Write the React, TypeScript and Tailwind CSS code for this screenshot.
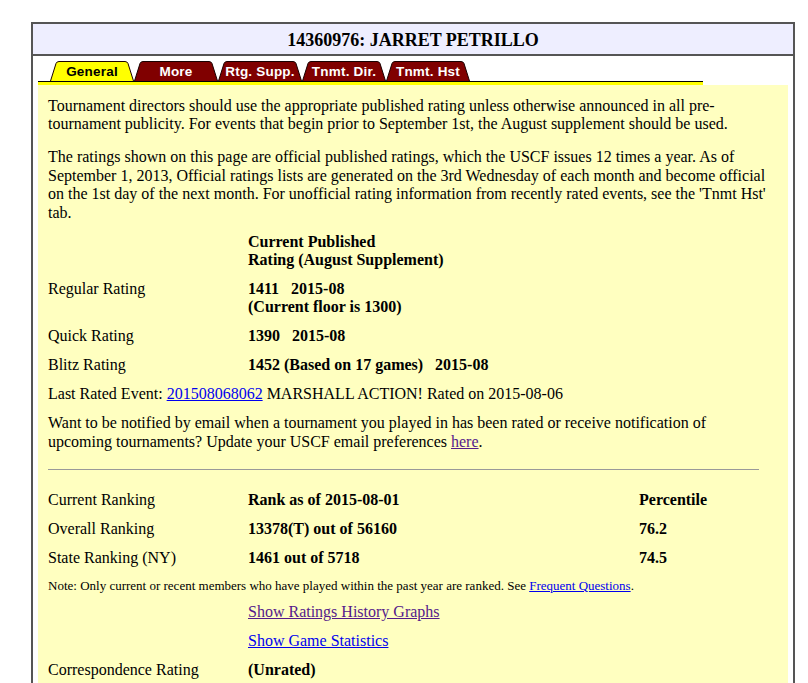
const serif = { fontFamily: '"Liberation Serif", "Times New Roman", serif' };

const tabs = [
  { label: "General", active: true },
  { label: "More" },
  { label: "Rtg. Supp." },
  { label: "Tnmt. Dir." },
  { label: "Tnmt. Hst" },
];

function Tab({ label, active }: { label: string; active?: boolean }) {
  return (
    <div className="relative w-[84px] h-[20px] flex items-center justify-center">
      <svg className="absolute inset-0" width="84" height="20" viewBox="0 0 84 20">
        <path
          d="M0.5 20 L6 2.5 Q6.8 0.5 9 0.5 L75 0.5 Q77.2 0.5 78 2.5 L83.5 20"
          fill={active ? "#ffff00" : "#800000"}
          stroke="#1a0000"
          strokeWidth="1"
        />
      </svg>
      <span
        className={`relative text-[13.5px] font-bold leading-none pt-[2px] tracking-[0.2px] ${active ? "text-black" : "text-white"}`}
        style={{ fontFamily: '"Liberation Sans", Arial, sans-serif' }}
      >
        {label}
      </span>
    </div>
  );
}

function Row({ label, value, extra }: { label?: string; value?: React.ReactNode; extra?: string }) {
  return (
    <div className="grid grid-cols-[200px_391px_1fr]">
      <div>{label}</div>
      <div className="font-bold">{value}</div>
      <div className="font-bold">{extra}</div>
    </div>
  );
}

export default function App() {
  return (
    <div className="min-h-screen bg-white text-black overflow-hidden" style={serif}>
      <div className="ml-[31px] mt-[22px] w-[764px] border-2 border-[#555]">
        <div className="h-[32px] bg-[#eeeeff] border-b-2 border-[#555] flex items-center justify-center">
          <h1 className="text-[18px] font-bold pt-[2px]">14360976: JARRET PETRILLO</h1>
        </div>
        <div className="px-[5px] pt-[5px]">
          <div className="w-[665px]">
            <div className="flex pl-[12px] border-b border-black">
              {tabs.map((t) => (
                <Tab key={t.label} label={t.label} active={t.active} />
              ))}
            </div>
            <div className="h-[3px] bg-[#ffff00]" />
          </div>
          <div className="bg-[#ffffc0] pl-[10px] pt-[12px] pb-[20px] text-[16px] leading-[18.4px] flex flex-col gap-[10.6px]">
            <p className="whitespace-nowrap">
              Tournament directors should use the appropriate published rating unless otherwise announced in all pre-
              <br />
              tournament publicity. For events that begin prior to September 1st, the August supplement should be used.
            </p>
            <p className="whitespace-nowrap mt-[4px]">
              The ratings shown on this page are official published ratings, which the USCF issues 12 times a year. As of
              <br />
              September 1, 2013, Official ratings lists are generated on the 3rd Wednesday of each month and become official
              <br />
              on the 1st day of the next month. For unofficial rating information from recently rated events, see the 'Tnmt Hst'
              <br />
              tab.
            </p>
            <Row
              value={
                <>
                  Current Published
                  <br />
                  Rating (August Supplement)
                </>
              }
            />
            <Row
              label="Regular Rating"
              value={
                <>
                  1411&nbsp;&nbsp; 2015-08
                  <br />
                  (Current floor is 1300)
                </>
              }
            />
            <Row label="Quick Rating" value={<>1390&nbsp;&nbsp; 2015-08</>} />
            <Row label="Blitz Rating" value={<>1452 (Based on 17 games)&nbsp;&nbsp; 2015-08</>} />
            <p>
              Last Rated Event: <a href="#" className="text-[#0000ee] underline">201508068062</a> MARSHALL ACTION! Rated on 2015-08-06
            </p>
            <p className="whitespace-nowrap">
              Want to be notified by email when a tournament you played in has been rated or receive notification of
              <br />
              upcoming tournaments? Update your USCF email preferences{" "}
              <a href="#" className="text-[#551a8b] underline">here</a>.
            </p>
            <div className="h-[18.4px] pt-[7.4px]">
              <div className="w-[711px] border-t border-[#999]" />
            </div>
            <Row label="Current Ranking" value="Rank as of 2015-08-01" extra="Percentile" />
            <Row label="Overall Ranking" value="13378(T) out of 56160" extra="76.2" />
            <Row label="State Ranking (NY)" value="1461 out of 5718" extra="74.5" />
            <p className="text-[13px] leading-[15px]">
              Note: Only current or recent members who have played within the past year are ranked. See{" "}
              <a href="#" className="text-[#0000ee] underline">Frequent Questions</a>.
            </p>
            <div className="pl-[200px]">
              <a href="#" className="text-[#551a8b] underline">Show Ratings History Graphs</a>
            </div>
            <div className="pl-[200px]">
              <a href="#" className="text-[#0000ee] underline">Show Game Statistics</a>
            </div>
            <div className="grid grid-cols-[200px_1fr]">
              <div>Correspondence Rating</div>
              <div className="font-bold">(Unrated)</div>
            </div>
          </div>
        </div>
      </div>
    </div>
  );
}
